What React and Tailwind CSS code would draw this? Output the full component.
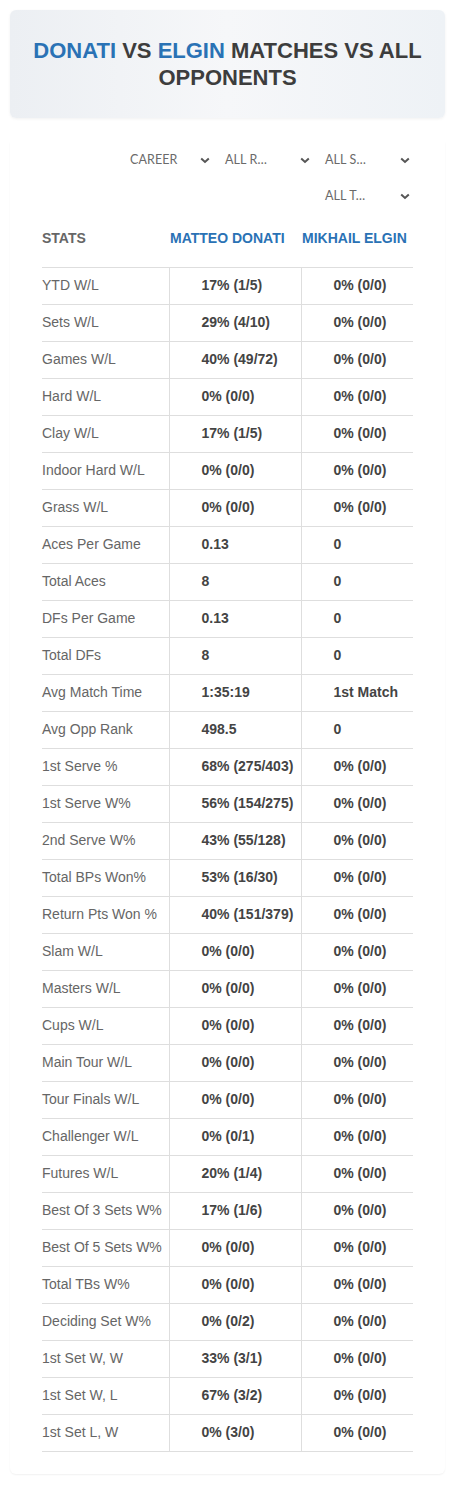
import React from 'react';

const rows = [
  ['YTD W/L', '17% (1/5)', '0% (0/0)'],
  ['Sets W/L', '29% (4/10)', '0% (0/0)'],
  ['Games W/L', '40% (49/72)', '0% (0/0)'],
  ['Hard W/L', '0% (0/0)', '0% (0/0)'],
  ['Clay W/L', '17% (1/5)', '0% (0/0)'],
  ['Indoor Hard W/L', '0% (0/0)', '0% (0/0)'],
  ['Grass W/L', '0% (0/0)', '0% (0/0)'],
  ['Aces Per Game', '0.13', '0'],
  ['Total Aces', '8', '0'],
  ['DFs Per Game', '0.13', '0'],
  ['Total DFs', '8', '0'],
  ['Avg Match Time', '1:35:19', '1st Match'],
  ['Avg Opp Rank', '498.5', '0'],
  ['1st Serve %', '68% (275/403)', '0% (0/0)'],
  ['1st Serve W%', '56% (154/275)', '0% (0/0)'],
  ['2nd Serve W%', '43% (55/128)', '0% (0/0)'],
  ['Total BPs Won%', '53% (16/30)', '0% (0/0)'],
  ['Return Pts Won %', '40% (151/379)', '0% (0/0)'],
  ['Slam W/L', '0% (0/0)', '0% (0/0)'],
  ['Masters W/L', '0% (0/0)', '0% (0/0)'],
  ['Cups W/L', '0% (0/0)', '0% (0/0)'],
  ['Main Tour W/L', '0% (0/0)', '0% (0/0)'],
  ['Tour Finals W/L', '0% (0/0)', '0% (0/0)'],
  ['Challenger W/L', '0% (0/1)', '0% (0/0)'],
  ['Futures W/L', '20% (1/4)', '0% (0/0)'],
  ['Best Of 3 Sets W%', '17% (1/6)', '0% (0/0)'],
  ['Best Of 5 Sets W%', '0% (0/0)', '0% (0/0)'],
  ['Total TBs W%', '0% (0/0)', '0% (0/0)'],
  ['Deciding Set W%', '0% (0/2)', '0% (0/0)'],
  ['1st Set W, W', '33% (3/1)', '0% (0/0)'],
  ['1st Set W, L', '67% (3/2)', '0% (0/0)'],
  ['1st Set L, W', '0% (3/0)', '0% (0/0)'],
];

const filters = ['CAREER', 'ALL R…', 'ALL S…', 'ALL T…'];

function Chevron() {
  return (
    <svg width="10" height="7" viewBox="0 0 10 7" className="shrink-0">
      <path d="M1.2 1.4 L5 4.9 L8.8 1.4" fill="none" stroke="#555" strokeWidth="2" />
    </svg>
  );
}

function Select({ label, first }) {
  return (
    <div
      className={
        'h-9 flex items-center justify-between pr-[3px] text-[12.5px] text-[#6a6a6a] font-[Lato,sans-serif] tracking-[0.1px] ' +
        (first ? 'w-[100px] pl-[17px]' : 'w-[100px] pl-3')
      }
    >
      <span>{label}</span>
      <Chevron />
    </div>
  );
}

export default function App() {
  return (
    <div className="bg-white min-h-[1485px] font-['Liberation_Sans',Arial,sans-serif] pt-[10px]">
      {/* Title card */}
      <div className="mx-[10px] h-[108px] rounded-md bg-gradient-to-r from-[#eceff3] via-[#f6f7f9] to-[#eef2f6] shadow-[0_1px_3px_rgba(0,0,0,0.06)] flex items-center justify-center px-4">
        <h1 className="text-center text-[22px] leading-[27px] font-bold text-[#3d3d3d] uppercase">
          <span className="text-[#2a72b5]">Donati</span> vs <span className="text-[#2a72b5]">Elgin</span> Matches vs All Opponents
        </h1>
      </div>

      {/* Stats card */}
      <div className="mx-[10px] mt-[24px] rounded-b-md shadow-[0_1px_2px_rgba(0,0,0,0.06)] pb-[22px] px-[32px]">
        <div className="flex flex-wrap justify-end">
          {filters.map((f, i) => (
            <Select key={f} label={f} first={i === 0} />
          ))}
        </div>

        <table className="w-[371px] border-collapse text-[14px]">
          <thead>
            <tr className="h-[53px]">
              <th className="w-[127px] text-left font-bold text-[#666] align-middle pb-[4px]">STATS</th>
              <th className="w-[132px] text-left font-bold text-[#2a72b5] align-middle pl-px pb-[4px]">MATTEO DONATI</th>
              <th className="w-[112px] text-left font-bold text-[#2a72b5] align-middle pl-px pb-[4px]">MIKHAIL ELGIN</th>
            </tr>
          </thead>
          <tbody>
            {rows.map(([label, a, b]) => (
              <tr key={label} className="h-[37px] border-t border-b border-[#dedede]">
                <td className="text-[#666] align-middle">{label}</td>
                <td className="pl-[32px] border-l border-[#dedede] font-bold text-[#444] align-middle">{a}</td>
                <td className="pl-[32px] border-l border-[#dedede] font-bold text-[#444] align-middle">{b}</td>
              </tr>
            ))}
          </tbody>
        </table>
      </div>
    </div>
  );
}
